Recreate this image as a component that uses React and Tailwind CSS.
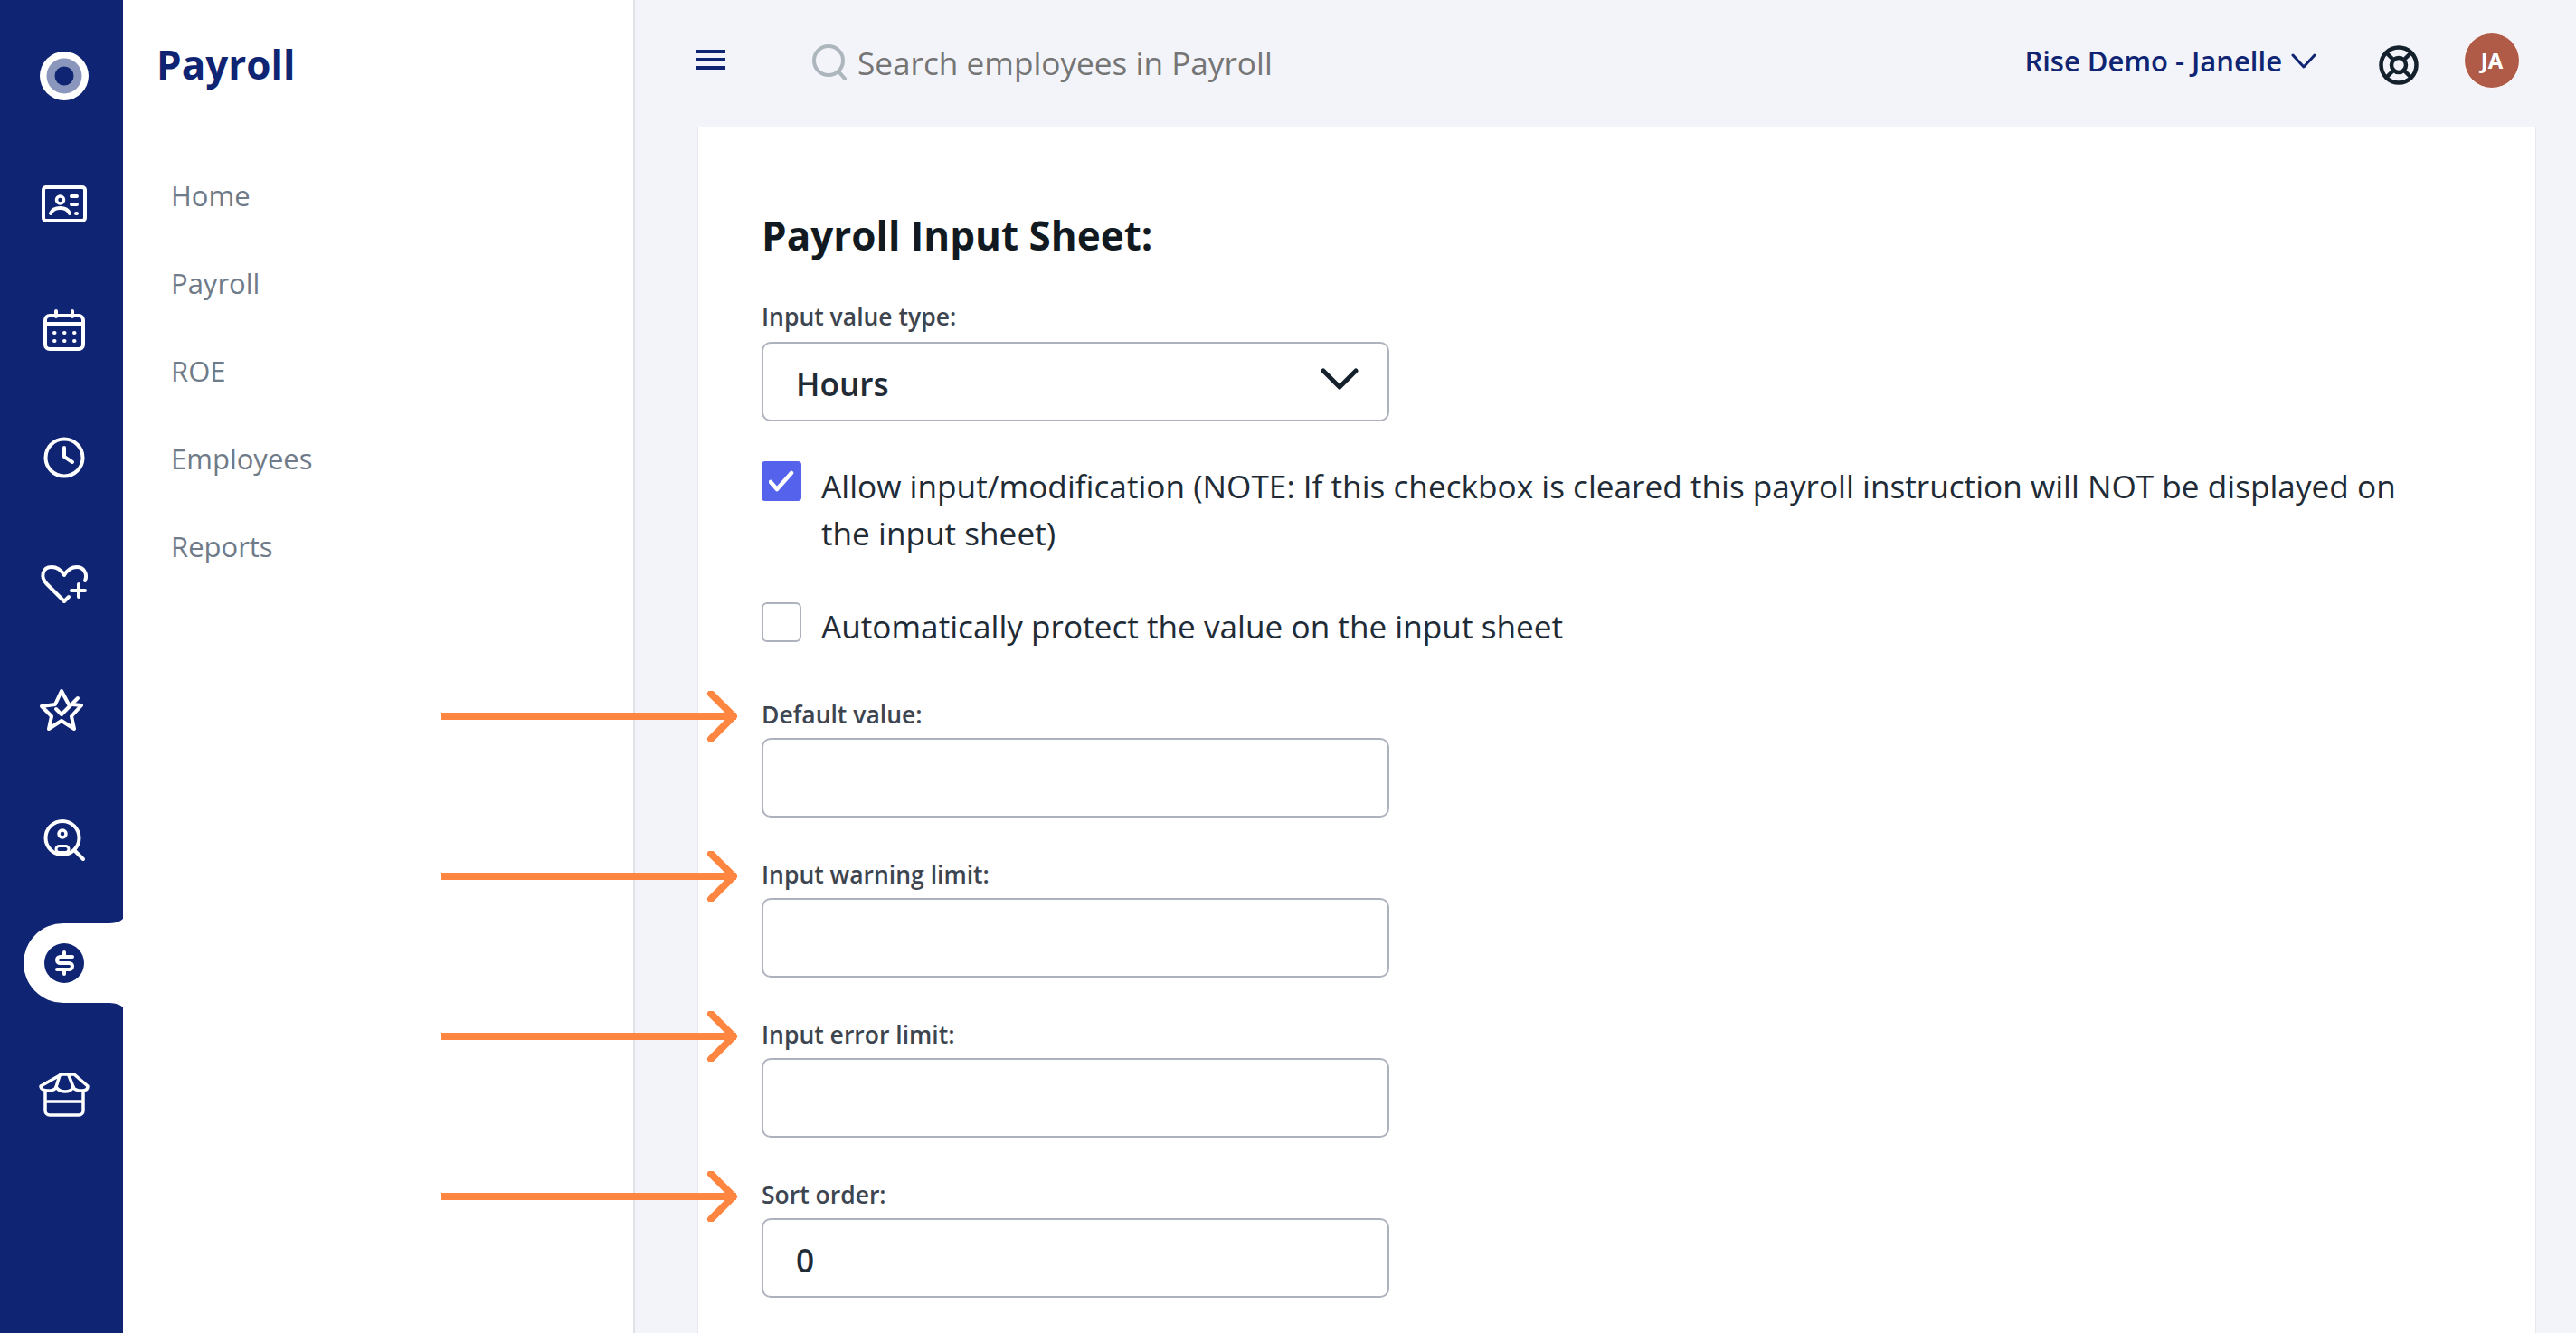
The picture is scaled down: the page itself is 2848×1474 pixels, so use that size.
const navItems = ['Home', 'Payroll', 'ROE', 'Employees', 'Reports']

const Logo = () => (
	<svg width="56" height="56" viewBox="0 0 56 56">
		<circle cx="28" cy="28" r="27" fill="#fff" />
		<circle cx="28" cy="28" r="19.5" fill="#8b96bd" />
		<circle cx="28" cy="28" r="10.5" fill="#0f2573" />
	</svg>
)

const IconBase = ({ children, w = 56, h = 56 }) => (
	<svg
		width={w}
		height={h}
		viewBox={`0 0 ${w} ${h}`}
		fill="none"
		stroke="#fff"
		strokeWidth="4"
		strokeLinecap="round"
		strokeLinejoin="round"
	>
		{children}
	</svg>
)

const IdCardIcon = () => (
	<IconBase h={44}>
		<rect x="5" y="4" width="46" height="37" rx="3" />
		<circle cx="23.500" cy="18" r="4" strokeWidth="3.5" />
		<path d="M13 33c2-5 6-6 10.500-6s8.500 1 10.500 6" />
		<path d="M36 14h6M36 23h6M41 33h1" />
	</IconBase>
)

const CalendarIcon = () => (
	<IconBase h={46}>
		<rect x="7" y="7" width="42" height="37" rx="5" />
		<path d="M7 16h42M19 2v6M37 2v6" />
		<path d="M17 26h.5M28 26h.5M39 26h.5M17 35h.5M28 35h.5M39 35h.5" />
	</IconBase>
)

const ClockIcon = () => (
	<IconBase h={48}>
		<circle cx="28" cy="24" r="20.5" />
		<path d="M28 13v10l9 6" />
	</IconBase>
)

const HeartIcon = () => (
	<IconBase h={44}>
		<path d="M33 35l-5 5L9 21C1 13 4 2 14 2c6 0 11 4 14 9 3-5 8-9 14-9 8 0 12 8 9 15" />
		<path d="M44 21v14M36 28h15" />
	</IconBase>
)

const StarIcon = () => (
	<IconBase h={48}>
		<path d="M33 18L25 3l-7 15-15 2 11 11-3 14 14-9 14 9-3-14 11-12-10-1" />
		<path d="M19 23l6 6 18-18" />
	</IconBase>
)

const SearchUserIcon = () => (
	<IconBase h={50}>
		<circle cx="26" cy="20.500" r="18.500" />
		<circle cx="26" cy="16" r="4" strokeWidth="3.5" />
		<rect x="19" y="29.500" width="14" height="7" rx="3.5" strokeWidth="3" />
		<path d="M40 35l9 9" />
	</IconBase>
)

const DollarIcon = () => (
	<svg width="44" height="44" viewBox="0 0 44 44" fill="none" stroke="#fff" strokeWidth="4" strokeLinecap="round">
		<circle cx="22" cy="22" r="22" fill="#0f2573" stroke="none" />
		<path d="M31 15H17.5a3.5 3.5 0 0 0 0 7h10a3.500 3.500 0 0 1 0 7H14M22 10v4M22 30v4" />
	</svg>
)

const StoreIcon = () => (
	<IconBase h={50}>
		<path
			d="M25 2H39L54 15c0 4-3 5-6 5-5 0-9-1-10-4-1 3-5 5-9 5s-8-2-10-5c-1 3-5 4-9 4-3 0-8-1-8-5z"
			strokeWidth="3.5"
		/>
		<path d="M23 3L19 16M33 3L38 16" strokeWidth="3.5" />
		<path d="M7 21V42a5 5 0 0 0 5 5H44a5 5 0 0 0 5-5V21M7 32H49" strokeWidth="3.5" />
	</IconBase>
)

const ActiveTab = () => (
	<div className="relative flex h-[88px] w-[110px] items-center rounded-l-[44px] bg-white pl-[23px]">
		<svg className="absolute -top-[5px] right-0" width="18" height="6" viewBox="0 0 18 6">
			<path d="M18 0C14 4 8 5 0 5V6H18Z" fill="#fff" />
		</svg>
		<svg className="absolute -bottom-[5px] right-0" width="18" height="6" viewBox="0 0 18 6">
			<path d="M18 6C14 2 8 1 0 1V0H18Z" fill="#fff" />
		</svg>
		<DollarIcon />
	</div>
)

const Rail = () => (
	<aside className="flex h-full w-[136px] shrink-0 flex-col bg-[#0f2573]">
		<div className="ml-[43px] mt-[56px]">
			<Logo />
		</div>
		<div className="ml-[43px] mt-[91px]">
			<IdCardIcon />
		</div>
		<div className="ml-[43px] mt-[95px]">
			<CalendarIcon />
		</div>
		<div className="ml-[43px] mt-[94px]">
			<ClockIcon />
		</div>
		<div className="ml-[43px] mt-[95px]">
			<HeartIcon />
		</div>
		<div className="ml-[43px] mt-[92px]">
			<StarIcon />
		</div>
		<div className="ml-[43px] mt-[97px]">
			<SearchUserIcon />
		</div>
		<div className="ml-auto mt-[65px]">
			<ActiveTab />
		</div>
		<div className="ml-[43px] mt-[77px]">
			<StoreIcon />
		</div>
	</aside>
)

const Sidebar = () => (
	<nav className="h-full w-[566px] shrink-0 border-r-2 border-[#dfe1e6] bg-white pl-[37px]">
		<h1 className="mt-[41px] text-[44px] font-bold leading-[60px] text-[#0f2573]">Payroll</h1>
		<ul className="ml-[16px] mt-[93px] flex flex-col gap-[53px]">
			{navItems.map((item) => (
				<li key={item} className="text-[31px] leading-[44px] text-[#6f7b88]">
					{item}
				</li>
			))}
		</ul>
	</nav>
)

const Header = () => (
	<header className="flex h-[140px] shrink-0 items-center">
		<div className="ml-[67px] flex w-[33px] flex-col gap-[5px] pb-[8px]">
			<span className="h-[4px] bg-[#0f2573]" />
			<span className="h-[4px] bg-[#0f2573]" />
			<span className="h-[4px] bg-[#0f2573]" />
		</div>
		<svg
			className="ml-[96px] mt-[-2px]"
			width="40"
			height="40"
			viewBox="0 0 40 40"
			fill="none"
			stroke="#adb5bd"
			strokeWidth="4"
			strokeLinecap="round"
		>
			<circle cx="18" cy="18" r="16" />
			<path d="M29 30l7 8" />
		</svg>
		<span className="ml-[10px] mb-[2px] text-[35.2px] leading-[50px] text-[#757575]">Search employees in Payroll</span>
		<div className="ml-auto flex items-center pr-[62px]">
			<span className="mb-[6px] text-[31px] font-semibold leading-[44px] text-[#0f2573]">Rise Demo - Janelle</span>
			<svg
				className="ml-[9px] mb-[4px]"
				width="30"
				height="20"
				viewBox="0 0 30 20"
				fill="none"
				stroke="#0f2573"
				strokeWidth="3"
				strokeLinecap="round"
				strokeLinejoin="round"
			>
				<path d="M3 3l12 13L27 3" />
			</svg>
			<svg
				className="ml-[68px] mt-[4px]"
				width="44"
				height="44"
				viewBox="0 0 44 44"
				fill="none"
				stroke="#14202b"
				strokeWidth="4.500"
			>
				<circle cx="22" cy="22" r="19.500" />
				<circle cx="22" cy="22" r="8" />
				<path d="M16 16L8 8M28 16l8-8M16 28l-8 8M28 28l8 8" />
			</svg>
			<div className="ml-[50px] mb-[6px] flex h-[62px] w-[62px] items-center justify-center rounded-full border border-white bg-[#b05a48] text-[24px] font-bold text-white">
				JA
			</div>
		</div>
	</header>
)

const Arrow = () => (
	<svg
		className="absolute -left-[354px] -top-[8px]"
		width="332"
		height="56"
		viewBox="0 0 332 56"
		fill="none"
		stroke="#fe8640"
	>
		<path d="M0 28H326" strokeWidth="8" />
		<path d="M298 3l25 25-25 25" strokeWidth="8" strokeLinecap="round" strokeLinejoin="round" />
	</svg>
)

const Field = ({ label, value, className }) => (
	<div className={`relative ${className}`}>
		<Arrow />
		<label className="block text-[26.5px] font-semibold leading-[36px] text-[#3d4550]">{label}</label>
		<div className="mt-[8px] flex h-[88px] w-[694px] items-center rounded-[10px] border-2 border-[#adb2bd] px-[36px] pt-[4px] text-[35.2px] font-semibold text-[#212b36]">
			{value}
		</div>
	</div>
)

const InputSheet = () => (
	<section className="mr-[44px] ml-[69px] min-h-0 flex-1 border-x border-[#e6e8ef] bg-white pl-[70px] pt-[90px]">
		<h2 className="text-[44px] font-bold leading-[60px] text-[#121a21]">Payroll Input Sheet:</h2>
		<label className="mt-[42px] block text-[26.5px] font-semibold leading-[36px] text-[#3d4550]">
			Input value type:
		</label>
		<div className="mt-[10px] flex h-[88px] w-[694px] items-center justify-between rounded-[10px] border-2 border-[#adb2bd] pl-[36px] pr-[32px] text-[35.2px] font-semibold text-[#212b36]">
			<span className="pt-[4px]">Hours</span>
			<svg
				width="42"
				height="24"
				viewBox="0 0 42 24"
				fill="none"
				stroke="#14202b"
				strokeWidth="5"
				strokeLinecap="round"
				strokeLinejoin="round"
				className="mb-[6px]"
			>
				<path d="M3 3l18 18L39 3" />
			</svg>
		</div>
		<div className="mt-[44px] flex gap-[22px]">
			<div className="flex h-[44px] w-[44px] shrink-0 items-center justify-center rounded-[4px] bg-[#5562eb]">
				<svg width="28" height="24" viewBox="0 0 28 24" fill="none" stroke="#fff" strokeWidth="4.500" strokeLinecap="round" strokeLinejoin="round">
					<path d="M2 13l7 8L25 3" />
				</svg>
			</div>
			<p className="mt-[1px] w-[1780px] text-[35.2px] leading-[52px] text-[#212b36]">
				Allow input/modification (NOTE: If this checkbox is cleared this payroll instruction will NOT be displayed on
				the input sheet)
			</p>
		</div>
		<div className="mt-[51px] flex gap-[22px]">
			<div className="h-[44px] w-[44px] shrink-0 rounded-[6px] border-2 border-[#adb2bd]" />
			<p className="text-[35.2px] leading-[52px] text-[#212b36]">
				Automatically protect the value on the input sheet
			</p>
		</div>
		<Field label="Default value:" className="mt-[54px]" />
		<Field label="Input warning limit:" className="mt-[45px]" />
		<Field label="Input error limit:" className="mt-[45px]" />
		<Field label="Sort order:" value="0" className="mt-[45px]" />
	</section>
)

const App = () => {
	return (
		<div className="flex h-screen overflow-hidden bg-[#f3f4f9] font-['Open_Sans',sans-serif]">
			<Rail />
			<Sidebar />
			<main className="flex min-w-0 flex-1 flex-col">
				<Header />
				<InputSheet />
			</main>
		</div>
	)
}

export default App
